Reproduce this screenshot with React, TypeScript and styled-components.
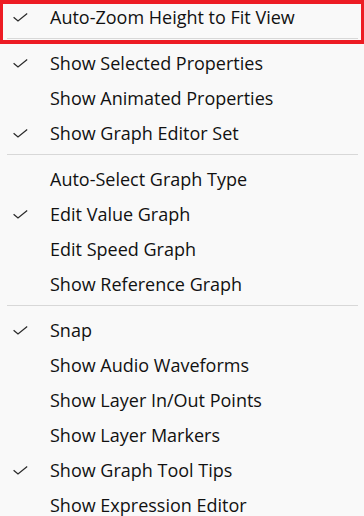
import React from "react";
import styled, { createGlobalStyle } from "styled-components";

const GlobalStyle = createGlobalStyle`
  html, body {
    margin: 0;
    padding: 0;
    background: #f9f9f9;
    overflow: hidden;
  }
`;

const Menu = styled.div`
  position: relative;
  width: 364px;
  height: 516px;
  overflow: hidden;
  background: #f9f9f9;
  font-family: "Open Sans", "Noto Sans CJK KR", sans-serif;
  font-size: 18px;
  color: #111111;
  display: flex;
  flex-direction: column;
`;

const Row = styled.div`
  flex: none;
  height: 35px;
  line-height: 35px;
  display: grid;
  grid-template-columns: 50px 1fr;
  white-space: nowrap;
`;

const CheckCell = styled.div`
  position: relative;
  height: 35px;
`;

const CheckIcon = styled.svg`
  position: absolute;
  left: 13px;
  top: 13px;
  width: 15px;
  height: 9px;
`;

const Label = styled.span`
  display: block;
`;

const Separator = styled.div`
  flex: none;
  height: 1px;
  margin: 3px 6px 7px 7px;
  background: #d8d8d8;
`;

const Highlight = styled.div`
  position: absolute;
  left: 0;
  top: 0;
  width: 364px;
  height: 44px;
  box-sizing: border-box;
  border-style: solid;
  border-color: #ed1c24;
  border-width: 4px 3px 4px 3px;
  pointer-events: none;
`;

type Item = { label: string; checked?: boolean } | "sep";

const items: Item[] = [
  { label: "Auto-Zoom Height to Fit View", checked: true },
  "sep",
  { label: "Show Selected Properties", checked: true },
  { label: "Show Animated Properties" },
  { label: "Show Graph Editor Set", checked: true },
  "sep",
  { label: "Auto-Select Graph Type" },
  { label: "Edit Value Graph", checked: true },
  { label: "Edit Speed Graph" },
  { label: "Show Reference Graph" },
  "sep",
  { label: "Snap", checked: true },
  { label: "Show Audio Waveforms" },
  { label: "Show Layer In/Out Points" },
  { label: "Show Layer Markers" },
  { label: "Show Graph Tool Tips", checked: true },
  { label: "Show Expression Editor" },
];

function Check() {
  return (
    <CheckIcon viewBox="0 0 15 9">
      <polyline points="0.6,4.2 5,8 14.2,0.6" fill="none" stroke="#2b2b2b" strokeWidth="1.25" />
    </CheckIcon>
  );
}

export default function App() {
  return (
    <>
      <GlobalStyle />
      <Menu>
        {items.map((it, i) =>
          it === "sep" ? (
            <Separator key={i} />
          ) : (
            <Row key={i}>
              <CheckCell>{it.checked && <Check />}</CheckCell>
              <Label>{it.label}</Label>
            </Row>
          )
        )}
        <Highlight />
      </Menu>
    </>
  );
}
